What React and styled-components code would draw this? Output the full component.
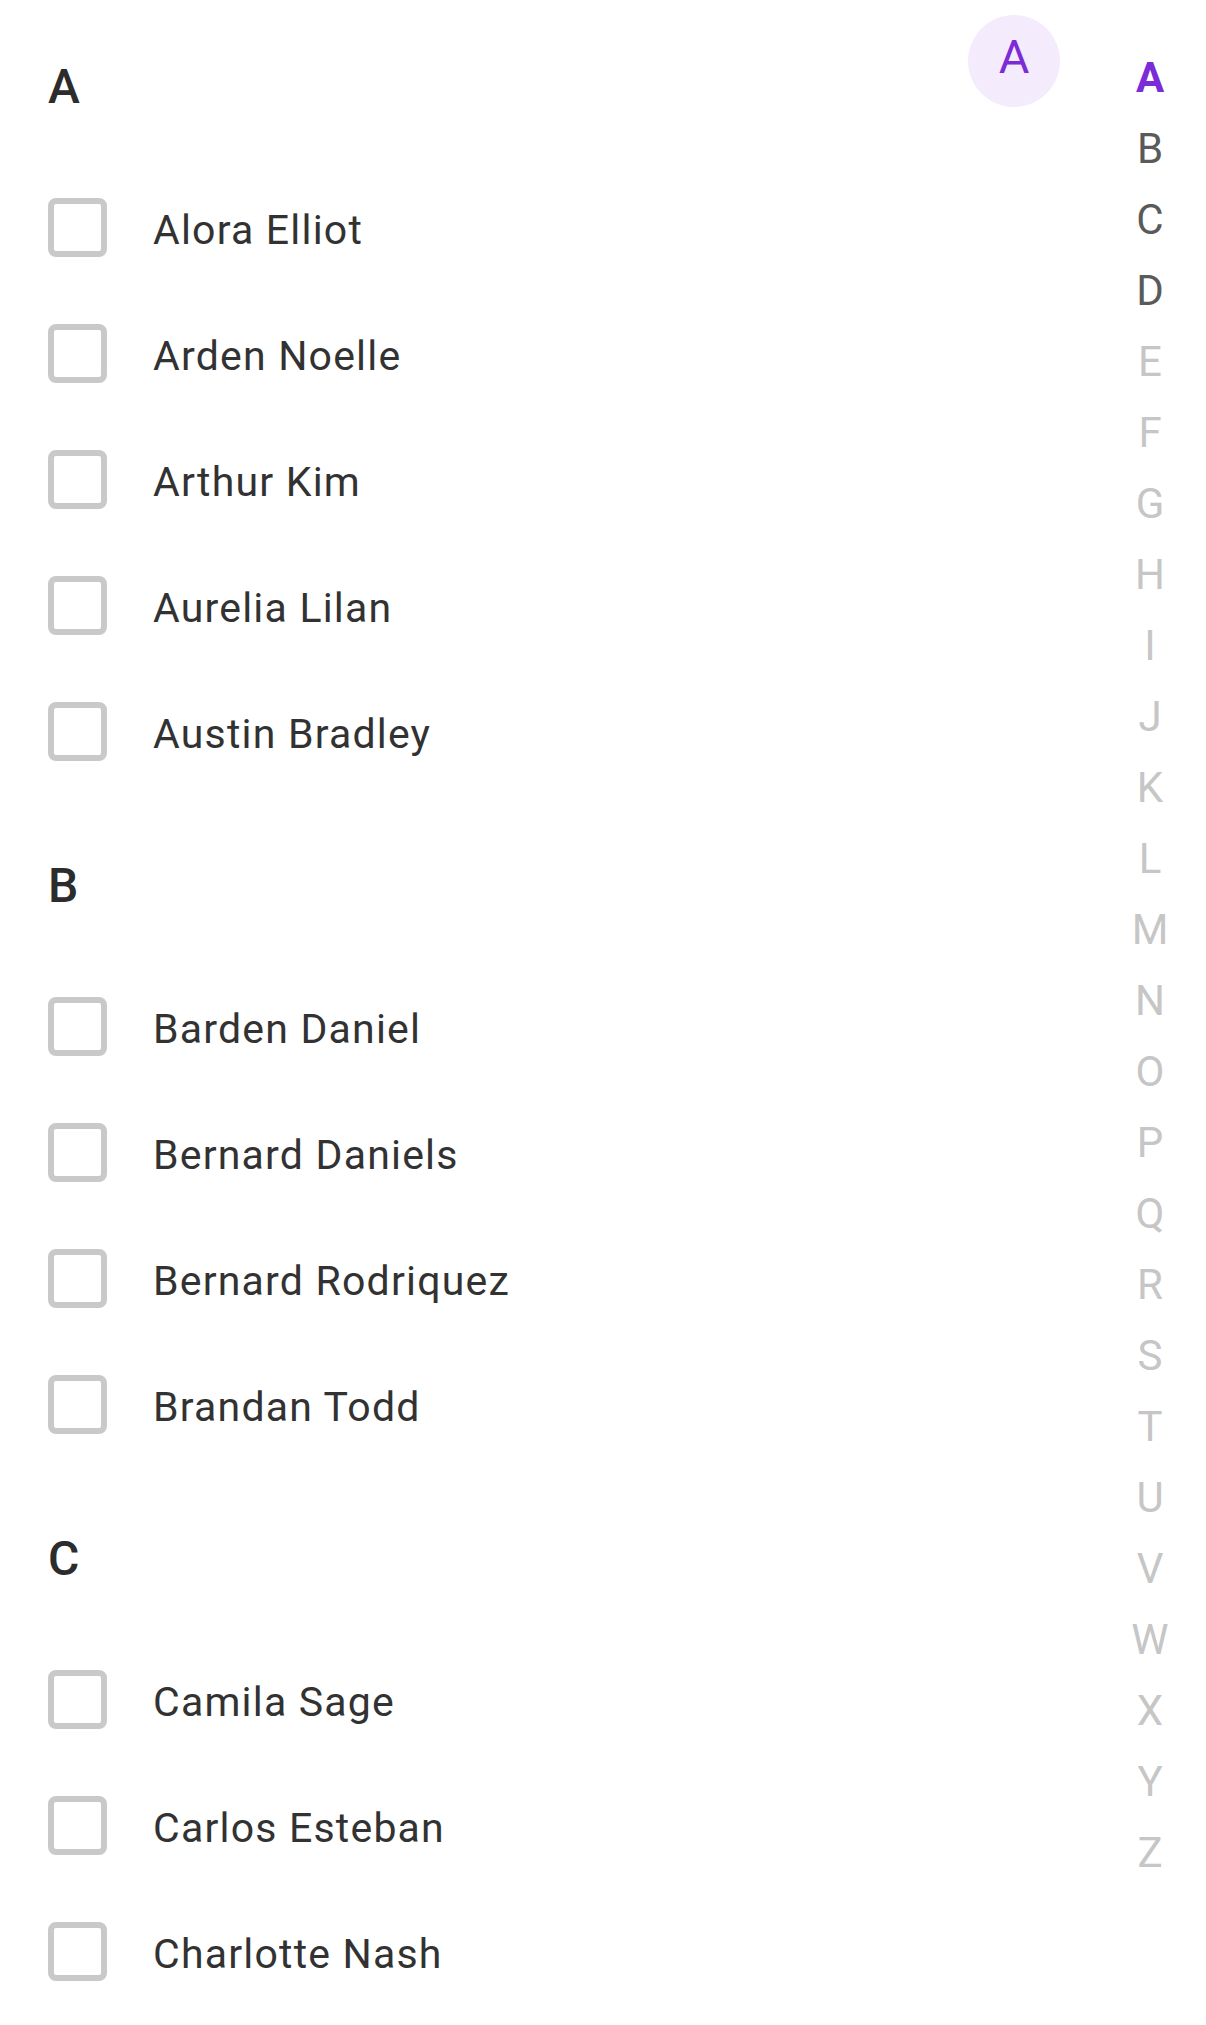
import React from 'react';
import styled, { createGlobalStyle } from 'styled-components';

const GlobalStyle = createGlobalStyle`
    html, body {
        margin: 0;
        padding: 0;
        background: #fff;
    }

    body {
        font-family: Roboto, "Noto Sans", "Liberation Sans", sans-serif;
        -webkit-font-smoothing: antialiased;
    }
`;

const Page = styled.div`
    display: flex;
    position: relative;
    width: 1206px;
    min-height: 2025px;
    box-sizing: border-box;
    padding-top: 10px;
    background: #fff;
`;

const List = styled.div`
    flex: 1;
    padding-left: 48px;
`;

const Section = styled.section`
    & + & {
        margin-top: 15px;
    }
`;

const SectionTitle = styled.div`
    height: 154px;
    line-height: 154px;
    font-size: 48px;
    font-weight: 500;
    color: #2c2c2c;
`;

const Row = styled.label`
    display: flex;
    align-items: center;
    height: 126px;
    cursor: pointer;
`;

const Box = styled.span`
    display: block;
    flex: none;
    width: 59px;
    height: 59px;
    box-sizing: border-box;
    border: 6px solid #c9c9c9;
    border-radius: 8px;
    background: ${p => (p.checked ? '#7b2cd6' : '#fff')};
`;

const Name = styled.span`
    margin-left: 46px;
    padding-top: 5px;
    font-size: 41px;
    letter-spacing: 1.2px;
    color: #323232;
`;

const IndexBar = styled.nav`
    position: relative;
    width: 84px;
    margin-right: 14px;
    padding-top: 32px;
`;

const IndexLetter = styled.div`
    height: 71px;
    line-height: 71px;
    text-align: center;
    font-size: 42px;
    font-weight: ${p => (p.active ? 700 : 400)};
    color: ${p => (p.active ? '#7b2cd6' : p.enabled ? '#5a5a5a' : '#c6c6c6')};
`;

const Bubble = styled.div`
    position: absolute;
    top: 5px;
    left: -140px;
    width: 92px;
    height: 92px;
    border-radius: 50%;
    background: #f4ebfd;
    display: flex;
    align-items: center;
    justify-content: center;
    box-sizing: border-box;
    padding-bottom: 10px;
    font-size: 47px;
    color: #7b2cd6;
`;

const groups = [
    { letter: 'A', names: ['Alora Elliot', 'Arden Noelle', 'Arthur Kim', 'Aurelia Lilan', 'Austin Bradley'] },
    { letter: 'B', names: ['Barden Daniel', 'Bernard Daniels', 'Bernard Rodriquez', 'Brandan Todd'] },
    { letter: 'C', names: ['Camila Sage', 'Carlos Esteban', 'Charlotte Nash'] },
];

const letters = 'ABCDEFGHIJKLMNOPQRSTUVWXYZ'.split('');
const enabledLetters = ['B', 'C', 'D'];

export default function App() {
    const active = 'A';

    return (
        <>
            <GlobalStyle />
            <Page>
                <List>
                    {groups.map(group => (
                        <Section key={group.letter}>
                            <SectionTitle>{group.letter}</SectionTitle>
                            {group.names.map(name => (
                                <Row key={name}>
                                    <Box />
                                    <Name>{name}</Name>
                                </Row>
                            ))}
                        </Section>
                    ))}
                </List>

                <IndexBar>
                    <Bubble>{active}</Bubble>
                    {letters.map(l => (
                        <IndexLetter key={l} active={l === active} enabled={enabledLetters.includes(l)}>
                            {l}
                        </IndexLetter>
                    ))}
                </IndexBar>
            </Page>
        </>
    );
}
